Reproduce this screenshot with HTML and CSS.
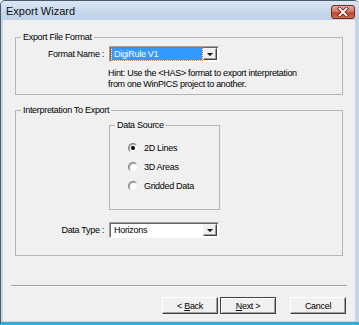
FILE: index.html
```html
<!DOCTYPE html>
<html lang="en">
<head>
  <meta charset="UTF-8" />
  <title>Export Wizard</title>
  <link rel="stylesheet" href="styles.css">
</head>
<body>
  <div class="window">
    <div class="titlebar">
      <span class="title">Export Wizard</span>
      <span class="close-btn">
        <svg width="12" height="10" viewBox="0 0 12 10">
          <path d="M2.5 1.5 L9.5 8.5 M9.5 1.5 L2.5 8.5" stroke="#5a2018" stroke-width="3.4" stroke-linecap="square"/>
          <path d="M2.5 1.5 L9.5 8.5 M9.5 1.5 L2.5 8.5" stroke="#ffffff" stroke-width="1.8" stroke-linecap="square"/>
        </svg>
      </span>
    </div>

    <div class="client">
      <fieldset class="group group-format">
        <legend>Export File Format</legend>
        <div class="field-row">
          <span class="field-label">Format Name :</span>
          <div class="combo">
            <span class="combo-value">
              <span class="selected-text">DigiRule V1</span>
            </span>
            <span class="combo-arrow"><span class="arrow-glyph"></span></span>
          </div>
        </div>
        <p class="hint">Hint: Use the &lt;HAS&gt; format to export interpretation<br>from one WinPICS project to another.</p>
      </fieldset>

      <fieldset class="group group-interp">
        <legend>Interpretation To Export</legend>
        <fieldset class="group group-source">
          <legend>Data Source</legend>
          <div class="radio-list">
            <div class="radio-row"><span class="radio checked"></span><span>2D Lines</span></div>
            <div class="radio-row"><span class="radio"></span><span>3D Areas</span></div>
            <div class="radio-row"><span class="radio"></span><span>Gridded Data</span></div>
          </div>
        </fieldset>
        <div class="field-row type-row">
          <span class="field-label">Data Type :</span>
          <div class="combo">
            <span class="combo-value plain">Horizons</span>
            <span class="combo-arrow"><span class="arrow-glyph"></span></span>
          </div>
        </div>
      </fieldset>

      <div class="separator"></div>

      <div class="button-row">
        <button class="btn">&lt; <u>B</u>ack</button>
        <button class="btn default"><u>N</u>ext &gt;</button>
        <button class="btn cancel">Cancel</button>
      </div>
    </div>
  </div>
</body>
</html>
```

FILE: styles.css
```css
* {
  box-sizing: border-box;
}

body {
  margin: 0;
  background: #ffffff;
  font-family: "Liberation Sans", Arial, sans-serif;
  font-size: 9px;
  letter-spacing: -0.3px;
  color: #000;
}

.window {
  width: 359px;
  height: 325px;
  display: flex;
  flex-direction: column;
  background: #c4d5e9;
  border-left: 1px solid #4a5a6b;
  border-top: 1px solid #4a5a6b;
  border-bottom: 3px solid #35add3;
  border-radius: 5px 5px 0 0;
  overflow: hidden;
}

.titlebar {
  height: 19px;
  flex: none;
  display: flex;
  align-items: center;
  justify-content: space-between;
  padding: 0 4px 0 5px;
  background: linear-gradient(to bottom, #dce7f4, #c6d7eb 60%, #c0d2e8);
}

.title {
  font-size: 11px;
  letter-spacing: 0;
  color: #111;
}

.close-btn {
  width: 24px;
  height: 14px;
  margin-top: 3px;
  display: flex;
  align-items: center;
  justify-content: center;
  border: 1px solid #6b2a22;
  border-radius: 3px;
  background: linear-gradient(to bottom, #e9a899, #d7735f 50%, #c2432c 55%, #cf6a4d);
}

.client {
  flex: 1;
  margin: 0 4px 1px 2px;
  background: #f0f0f0;
  display: flex;
  flex-direction: column;
}

.group {
  margin: 0;
  padding: 0;
  border: 1px solid #b5b5b5;
  min-width: 0;
}

.group legend {
  margin-left: 5px;
  padding: 0 2px;
  line-height: 11px;
}

.group-format {
  margin: 12px 12px 0 12px;
  height: 63px;
}

.group-interp {
  margin: 10px 12px 0 12px;
  height: 151px;
}

.group-source {
  margin: 4px 0 0 93px;
  width: 111px;
  height: 90px;
}

.field-row {
  display: flex;
  align-items: center;
  gap: 5px;
  margin-top: 3px;
}

.type-row {
  margin-top: 12px;
}

.field-label {
  width: 88px;
  text-align: right;
}

.combo {
  width: 110px;
  height: 16px;
  display: flex;
  background: #fff;
  border: 1px solid;
  border-color: #a0a0a0 #fff #fff #a0a0a0;
  box-shadow: inset 1px 1px #696969;
  padding: 1px;
}

.combo-value {
  flex: 1;
  display: flex;
  align-items: center;
  padding: 0 1px;
}

.combo-value.plain {
  padding-left: 3px;
}

.selected-text {
  flex: 1;
  height: 12px;
  line-height: 12px;
  padding-left: 2px;
  color: #fff;
  background: #3399ff;
  outline: 1px dotted #c08040;
}

.combo-arrow {
  width: 14px;
  display: flex;
  align-items: center;
  justify-content: center;
  background: #f0f0f0;
  border: 1px solid;
  border-color: #f4f4f4 #404040 #404040 #f4f4f4;
  box-shadow: inset -1px -1px #a0a0a0;
}

.arrow-glyph {
  width: 0;
  height: 0;
  border-left: 3px solid transparent;
  border-right: 3px solid transparent;
  border-top: 3px solid #000;
}

.hint {
  margin: 6px 0 0 92px;
  line-height: 11px;
}

.radio-list {
  padding: 7px 0 0 18px;
}

.radio-row {
  height: 19px;
  display: flex;
  align-items: center;
  gap: 6px;
}

.radio {
  position: relative;
  width: 10px;
  height: 10px;
  border-radius: 50%;
  background: #fff;
  border: 1px solid;
  border-color: #808080 #e8e8e8 #e8e8e8 #808080;
  box-shadow: inset 1px 1px #a8a8a8;
}

.radio.checked::after {
  content: "";
  position: absolute;
  left: 2px;
  top: 2px;
  width: 4px;
  height: 4px;
  border-radius: 50%;
  background: #000;
}

.separator {
  margin: 29px 8px 0 8px;
  border-top: 1px solid #a0a0a0;
  border-bottom: 1px solid #fff;
}

.button-row {
  display: flex;
  justify-content: flex-end;
  gap: 2px;
  margin: 10px 9px 0 0;
}

.btn {
  width: 56px;
  height: 17px;
  padding: 0;
  font: inherit;
  letter-spacing: inherit;
  color: #000;
  background: #f0f0f0;
  border: 1px solid;
  border-color: #fff #404040 #404040 #fff;
  box-shadow: inset -1px -1px #a0a0a0;
}

.btn.default {
  border-color: #404040;
  box-shadow: inset 1px 1px #fff, inset -1px -1px #a0a0a0;
}

.btn.cancel {
  margin-left: 12px;
}
```
